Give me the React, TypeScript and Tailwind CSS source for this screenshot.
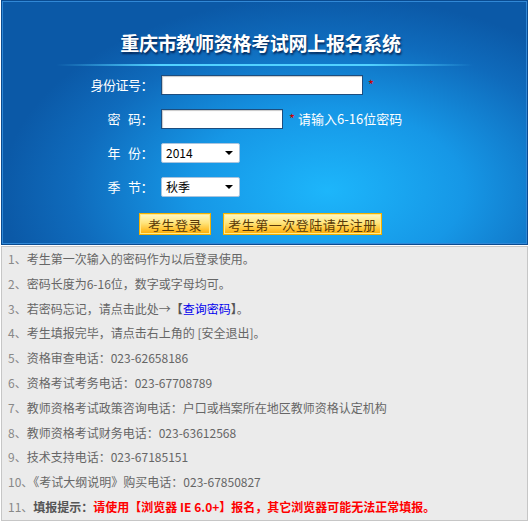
// Login page of the Chongqing teacher-qualification exam registration system

const font = "font-['Noto_Sans_CJK_SC','Noto_Sans',sans-serif]";

function Label({ children }: { children: React.ReactNode }) {
  return <div className="w-[151px] shrink-0 text-right text-[13px] tracking-[-0.5px] text-white">{children}</div>;
}

function FakeSelect({ value }: { value: string }) {
  return (
    <div className="flex h-[20px] w-[79px] items-center justify-between rounded-[2px] border border-[#a9c4de] bg-white pl-[4px] pr-[6px] text-[12px] text-black">
      <span>{value}</span>
      <span className="h-0 w-0 border-x-[4px] border-t-[4px] border-x-transparent border-t-black" />
    </div>
  );
}

function GoldButton({ children, width }: { children: React.ReactNode; width: string }) {
  return (
    <button
      className={`${width} h-[22px] border border-[#f5b000] bg-[linear-gradient(#fff8c8_0%,#ffe47a_45%,#ffab00_100%)] text-[13px] leading-none tracking-[0.5px] text-[#5a3a08] shadow-[inset_0_0_0_1px_#ffe98a]`}
    >
      {children}
    </button>
  );
}

const tips: React.ReactNode[] = [
  "考生第一次输入的密码作为以后登录使用。",
  "密码长度为6-16位，数字或字母均可。",
  <>
    若密码忘记，请点击此处→<span className="font-bold text-[#555]">【</span>
    <span className="text-[#0000ee]">查询密码</span>
    <span className="font-bold text-[#555]">】</span>。
  </>,
  "考生填报完毕，请点击右上角的 [安全退出]。",
  "资格审查电话：023-62658186",
  "资格考试考务电话：023-67708789",
  "教师资格考试政策咨询电话：户口或档案所在地区教师资格认定机构",
  "教师资格考试财务电话：023-63612568",
  "技术支持电话：023-67185151",
  "《考试大纲说明》购买电话：023-67850827",
  <>
    <span className="font-bold text-[#555]">填报提示：</span>
    <span className="font-bold text-[#ff0000]">请使用【浏览器 IE 6.0+】报名，其它浏览器可能无法正常填报。</span>
  </>,
];

export default function App() {
  return (
    <div className={`${font} w-[531px] bg-white pl-px`}>
      <div className="w-[527px]">
        {/* Blue login panel */}
        <div className="h-[245px] border border-[#0a4b90] bg-[radial-gradient(ellipse_62%_80%_at_62%_78%,#1db6fb_0%,#1697e6_42%,#0f6bbc_78%,#0b59a7_100%)] shadow-[inset_0_0_0_1px_#3188d6]">
          <div className="flex justify-center pr-[8px] pt-[30px]">
            <h1 className="text-[19px] leading-[24px] font-bold tracking-[-0.3px] text-white [text-shadow:1px_2px_2px_rgba(0,20,60,0.75)]">
              重庆市教师资格考试网上报名系统
            </h1>
          </div>
          <div className="mx-[54px] mt-[9px] h-[2px] bg-[linear-gradient(90deg,rgba(80,210,255,0)_0%,#52d2ff_25%,#52d2ff_75%,rgba(80,210,255,0)_100%)]" />

          <div className="mt-[2px] flex flex-col">
            <div className="flex h-[34px] items-center">
              <Label>身份证号：</Label>
              <input className="ml-[8px] h-[20px] w-[202px] border border-[#1d4d7e] bg-white shadow-[inset_1px_1px_1px_#c8c8c8] outline-none" />
              <span className="ml-[5px] text-[13px] text-[#cc0000]">*</span>
            </div>
            <div className="flex h-[34px] items-center">
              <Label>
                <span className="mr-[8px]">密</span>码：
              </Label>
              <input
                type="password"
                className="ml-[8px] h-[20px] w-[122px] border border-[#1d4d7e] bg-white shadow-[inset_1px_1px_1px_#c8c8c8] outline-none"
              />
              <span className="ml-[6px] text-[13px] text-[#cc0000]">*</span>
              <span className="ml-[3px] text-[13px] text-white">请输入6-16位密码</span>
            </div>
            <div className="flex h-[34px] items-center">
              <Label>
                <span className="mr-[8px]">年</span>份：
              </Label>
              <div className="ml-[8px]">
                <FakeSelect value="2014" />
              </div>
            </div>
            <div className="flex h-[34px] items-center">
              <Label>
                <span className="mr-[8px]">季</span>节：
              </Label>
              <div className="ml-[8px]">
                <FakeSelect value="秋季" />
              </div>
            </div>
          </div>

          <div className="mt-[9px] flex gap-[12px] pl-[137px]">
            <GoldButton width="w-[72px]">考生登录</GoldButton>
            <GoldButton width="w-[159px]">考生第一次登陆请先注册</GoldButton>
          </div>
        </div>

        {/* Notes */}
        <ol className="mt-[1px] border border-[#c6c6c6] bg-[#ebebeb] pl-[6px] text-[12px] leading-[24.8px] text-[#666]">
          {tips.map((tip, i) => (
            <li key={i} className="whitespace-nowrap">
              <span className="text-[#888]">{i + 1}、</span>
              {tip}
            </li>
          ))}
        </ol>
      </div>
    </div>
  );
}
